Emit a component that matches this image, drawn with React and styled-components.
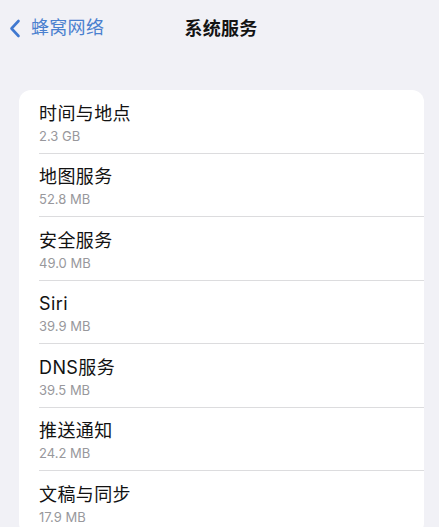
import styled, { createGlobalStyle } from 'styled-components';

const GlobalStyle = createGlobalStyle`
  html, body {
    margin: 0;
    padding: 0;
    background: #f1f1f6;
  }
  body {
    font-family: Inter, "Noto Sans CJK SC", "Noto Sans", sans-serif;
    -webkit-font-smoothing: antialiased;
  }
`;

const services = [
  { name: '时间与地点', size: '2.3 GB' },
  { name: '地图服务', size: '52.8 MB' },
  { name: '安全服务', size: '49.0 MB' },
  { name: 'Siri', size: '39.9 MB' },
  { name: 'DNS服务', size: '39.5 MB' },
  { name: '推送通知', size: '24.2 MB' },
  { name: '文稿与同步', size: '17.9 MB' },
];

function App() {
  return (
    <Page>
      <GlobalStyle />
      <NavBar>
        <BackButton>
          <svg width="12" height="19" viewBox="0 0 12 19" fill="none">
            <path d="M9.5 2 L2.5 9.5 L9.5 17" stroke="#3f78d0" strokeWidth="2.6" strokeLinecap="round" strokeLinejoin="round" />
          </svg>
          <span>蜂窝网络</span>
        </BackButton>
        <NavTitle>系统服务</NavTitle>
      </NavBar>
      <Card>
        {services.map((item) => (
          <Row key={item.name}>
            <RowTitle>{item.name}</RowTitle>
            <RowSize>{item.size}</RowSize>
          </Row>
        ))}
      </Card>
    </Page>
  );
}

const Page = styled.div`
  width: 439px;
  height: 527px;
  overflow: hidden;
  background: #f1f1f6;
`;

const NavBar = styled.div`
  position: relative;
  height: 58px;
  display: flex;
  align-items: center;
  justify-content: center;
`;

const BackButton = styled.div`
  position: absolute;
  left: 9px;
  top: 17px;
  display: flex;
  align-items: center;
  gap: 10px;
  color: #4a80cf;
  font-size: 18px;
  line-height: 22px;
  letter-spacing: 0.3px;
`;

const NavTitle = styled.h1`
  margin: 0 0 0 3px;
  font-size: 18px;
  line-height: 22px;
  font-weight: 700;
  color: #141414;
  letter-spacing: 0.3px;
`;

const Card = styled.div`
  margin: 32px 15px 0 19px;
  background: #ffffff;
  border-radius: 12px;
`;

const Row = styled.div`
  margin-left: 20px;
  padding: 12.5px 0 8px;
  border-bottom: 1px solid #dcdcde;
  display: flex;
  flex-direction: column;
  gap: 2px;
`;

const RowTitle = styled.div`
  font-size: 18px;
  line-height: 22px;
  color: #121212;
  letter-spacing: 0.4px;
`;

const RowSize = styled.div`
  font-size: 13px;
  line-height: 18px;
  color: #98989c;
`;

export default App;
